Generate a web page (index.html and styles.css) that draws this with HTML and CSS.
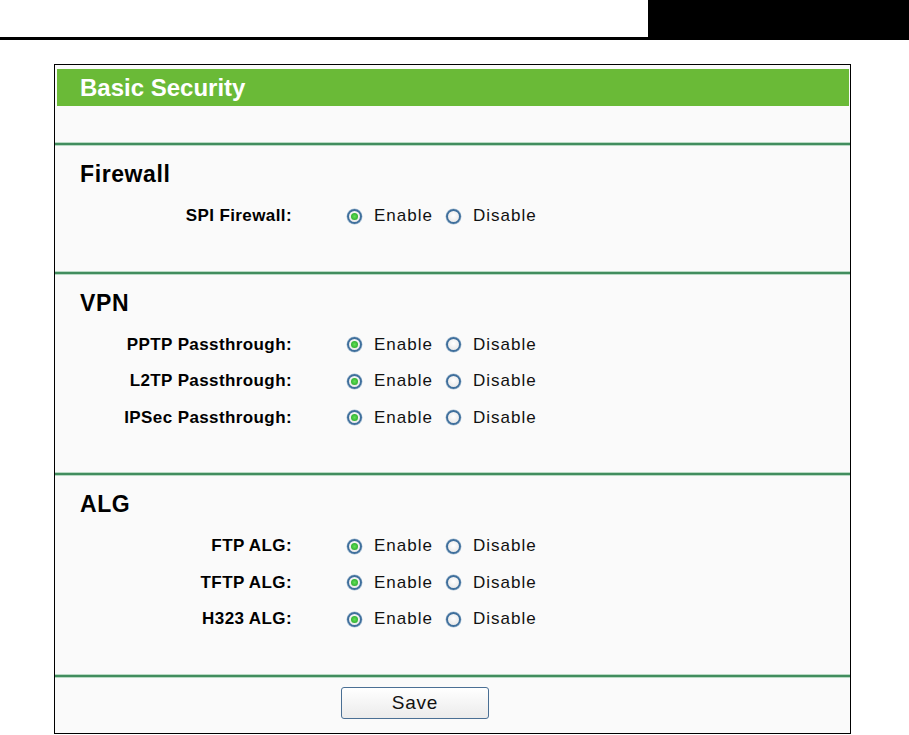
FILE: index.html
```html
<!DOCTYPE html>
<html>
<head>
    <meta name="viewport" content="width=device-width, initial-scale=1">
    <title>Basic Security</title>
    <link rel="stylesheet" href="styles.css">
</head>
<body>
    <div class="topbar">
        <div class="topbar-box"></div>
    </div>

    <div class="frame">
        <div class="title">Basic Security</div>
        <div class="blank"></div>

        <div class="section">
            <h2>Firewall</h2>
            <div class="row">
                <span class="label">SPI Firewall:</span>
                <span class="radio checked"></span><span class="opt">Enable</span>
                <span class="radio"></span><span class="opt">Disable</span>
            </div>
        </div>

        <div class="section">
            <h2>VPN</h2>
            <div class="row">
                <span class="label">PPTP Passthrough:</span>
                <span class="radio checked"></span><span class="opt">Enable</span>
                <span class="radio"></span><span class="opt">Disable</span>
            </div>
            <div class="row">
                <span class="label">L2TP Passthrough:</span>
                <span class="radio checked"></span><span class="opt">Enable</span>
                <span class="radio"></span><span class="opt">Disable</span>
            </div>
            <div class="row">
                <span class="label">IPSec Passthrough:</span>
                <span class="radio checked"></span><span class="opt">Enable</span>
                <span class="radio"></span><span class="opt">Disable</span>
            </div>
        </div>

        <div class="section">
            <h2>ALG</h2>
            <div class="row">
                <span class="label">FTP ALG:</span>
                <span class="radio checked"></span><span class="opt">Enable</span>
                <span class="radio"></span><span class="opt">Disable</span>
            </div>
            <div class="row">
                <span class="label">TFTP ALG:</span>
                <span class="radio checked"></span><span class="opt">Enable</span>
                <span class="radio"></span><span class="opt">Disable</span>
            </div>
            <div class="row">
                <span class="label">H323 ALG:</span>
                <span class="radio checked"></span><span class="opt">Enable</span>
                <span class="radio"></span><span class="opt">Disable</span>
            </div>
        </div>

        <div class="footer">
            <button class="save">Save</button>
        </div>
    </div>
</body>
</html>
```

FILE: styles.css
```css
body {
    margin: 0;
    font-family: "Liberation Sans", Arial, sans-serif;
    background-color: #fff;
    color: #000;
}

.topbar {
    height: 37px;
    border-bottom: 3px solid #000;
    display: flex;
    justify-content: flex-end;
}

.topbar-box {
    width: 261px;
    background-color: #000;
}

.frame {
    margin: 24px 0 0 54px;
    width: 795px;
    border: 1px solid #000;
    background-color: #fafafa;
    padding-top: 4px;
}

.title {
    margin: 0 1px 0 2px;
    height: 37px;
    line-height: 37px;
    background-color: #6aba37;
    color: #fff;
    font-weight: bold;
    font-size: 24px;
    padding-left: 23px;
}

.blank {
    height: 37px;
}

.section, .footer {
    border-top: 2px solid #428d5e;
    box-shadow: 0 -1px 0 #b9dac4, inset 0 1px 0 #b9dac4;
}

.section {
    padding: 18px 0 37px 0;
}

.section h2 {
    margin: 0 0 13px 25px;
    font-size: 23px;
    line-height: 22px;
    font-weight: bold;
    letter-spacing: 0.6px;
}

.row {
    display: flex;
    align-items: center;
    height: 36.5px;
    font-size: 17px;
}

.label {
    width: 237px;
    text-align: right;
    font-weight: bold;
    letter-spacing: 0.4px;
    margin-right: 55px;
}

.radio {
    box-sizing: border-box;
    width: 15px;
    height: 15px;
    border: 2px solid #3f6f9c;
    border-radius: 50%;
    background: radial-gradient(circle at 50% 40%, #fff 0%, #e2e2e2 100%);
    box-shadow: 0 0 0 0.5px #a9c1d6;
    margin-right: 12px;
    display: flex;
    align-items: center;
    justify-content: center;
}

.radio.checked::after {
    content: "";
    width: 7px;
    height: 7px;
    border-radius: 50%;
    background: radial-gradient(circle, #62e056 0%, #1f9e24 100%);
}

.opt {
    margin-right: 13px;
    color: #111;
    letter-spacing: 1px;
}

.footer {
    padding: 10px 0 14px 286px;
}

.save {
    width: 148px;
    height: 32px;
    font-family: "Liberation Sans", Arial, sans-serif;
    font-size: 19px;
    letter-spacing: 0.8px;
    color: #111;
    border: 1px solid #4a6f94;
    border-radius: 3px;
    background: linear-gradient(#ffffff, #ebebeb);
    cursor: pointer;
}
```
